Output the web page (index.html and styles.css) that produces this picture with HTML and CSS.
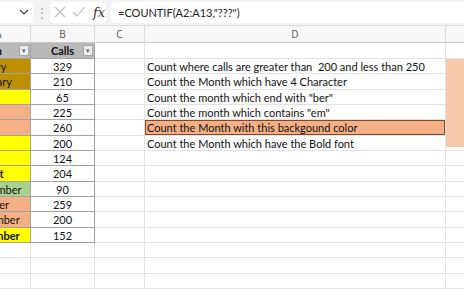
FILE: index.html
```html
<!DOCTYPE html>
<html>
    <head>
        <title>COUNTIF</title>
        <link rel="stylesheet" href="styles.css">
    </head>
    <body>
        <div class="formulaBar">
            <div class="nameBox">
                <svg width="10" height="6" viewBox="0 0 10 6"><path d="M1 1 L5 5 L9 1" fill="none" stroke="#444" stroke-width="1.2"/></svg>
            </div>
            <div class="grip">&#8942;</div>
            <div class="fxBox">
                <svg width="12" height="12" viewBox="0 0 12 12"><path d="M1 1 L11 11 M11 1 L1 11" stroke="#bdbdbd" stroke-width="1.1"/></svg>
                <svg width="14" height="12" viewBox="0 0 14 12"><path d="M1 6 L5 10 L13 1" fill="none" stroke="#bdbdbd" stroke-width="1.1"/></svg>
                <span class="fx">fx</span>
            </div>
            <div class="formula">=COUNTIF(A2:A13,"???")</div>
        </div>

        <div class="sheet">
            <div class="colHeads">
                <div class="colHead">A</div>
                <div class="colHead">B</div>
                <div class="colHead">C</div>
                <div class="colHead">D</div>
                <div class="colHead"></div>
            </div>

            <div class="grid">
                <div class="cell tbl head">Month<span class="filter">&#9662;</span></div>
                <div class="cell tbl head num">Calls<span class="filter">&#9662;</span></div>
                <div class="cell"></div><div class="cell"></div><div class="cell"></div>

                <div class="cell tbl gold">January</div>
                <div class="cell tbl num">329</div>
                <div class="cell"></div><div class="cell">Count where calls are greater than&nbsp; 200 and less than 250</div><div class="cell"></div>

                <div class="cell tbl gold">February</div>
                <div class="cell tbl num">210</div>
                <div class="cell"></div><div class="cell">Count the Month which have 4 Character</div><div class="cell"></div>

                <div class="cell tbl yellow">March</div>
                <div class="cell tbl num">65</div>
                <div class="cell"></div><div class="cell">Count the month which end with "ber"</div><div class="cell"></div>

                <div class="cell tbl salmon">April</div>
                <div class="cell tbl num">225</div>
                <div class="cell"></div><div class="cell">Count the month which contains "em"</div><div class="cell"></div>

                <div class="cell tbl salmon">May</div>
                <div class="cell tbl num">260</div>
                <div class="cell"></div><div class="cell picked">Count the Month with this backgound color</div><div class="cell"></div>

                <div class="cell tbl yellow">June</div>
                <div class="cell tbl num">200</div>
                <div class="cell"></div><div class="cell">Count the Month which have the Bold font</div><div class="cell"></div>

                <div class="cell tbl yellow">July</div>
                <div class="cell tbl num">124</div>
                <div class="cell"></div><div class="cell"></div><div class="cell"></div>

                <div class="cell tbl yellow bold">August</div>
                <div class="cell tbl num">204</div>
                <div class="cell"></div><div class="cell"></div><div class="cell"></div>

                <div class="cell tbl green">September</div>
                <div class="cell tbl num">90</div>
                <div class="cell"></div><div class="cell"></div><div class="cell"></div>

                <div class="cell tbl salmon">October</div>
                <div class="cell tbl num">259</div>
                <div class="cell"></div><div class="cell"></div><div class="cell"></div>

                <div class="cell tbl salmon">November</div>
                <div class="cell tbl num">200</div>
                <div class="cell"></div><div class="cell"></div><div class="cell"></div>

                <div class="cell tbl yellow bold">December</div>
                <div class="cell tbl num">152</div>
                <div class="cell"></div><div class="cell"></div><div class="cell"></div>

                <div class="cell"></div><div class="cell"></div><div class="cell"></div><div class="cell"></div><div class="cell"></div>
                <div class="cell"></div><div class="cell"></div><div class="cell"></div><div class="cell"></div><div class="cell"></div>
                <div class="cell"></div><div class="cell"></div><div class="cell"></div><div class="cell"></div><div class="cell"></div>
            </div>

            <div class="shape"></div>
        </div>
    </body>
</html>
```

FILE: styles.css
```css
body {
    margin: 0px;
    font-family: Lato, "Liberation Sans", sans-serif;
    color: #111;
    background-color: white;
    overflow: hidden;
}
.formulaBar {
    display: flex;
    align-items: center;
    height: 26px;
    box-sizing: border-box;
    padding: 2px 0 3px 0;
    background-color: #f3f3f3;
    border-bottom: 1px solid #dcdcdc;
}
.nameBox {
    width: 33px;
    height: 21px;
    box-sizing: border-box;
    background-color: white;
    border-radius: 0 4px 4px 0;
    display: flex;
    align-items: center;
    justify-content: flex-end;
    padding-right: 4px;
}
.grip {
    width: 17px;
    text-align: center;
    color: #a8a8a8;
    font-size: 12px;
}
.fxBox {
    width: 56px;
    height: 21px;
    box-sizing: border-box;
    background-color: white;
    border-radius: 4px;
    display: flex;
    align-items: center;
    gap: 6px;
    padding-left: 4px;
}
.fx {
    font-family: "DejaVu Serif", serif;
    font-style: italic;
    font-size: 13px;
    color: #333;
    margin-left: 1px;
}
.formula {
    flex: 1;
    height: 21px;
    margin-left: 5px;
    background-color: white;
    border-radius: 4px 0 0 4px;
    padding-left: 7px;
    font-size: 11px;
    line-height: 21px;
    color: #222;
}
.sheet {
    position: relative;
}
.colHeads {
    display: grid;
    grid-template-columns: 64px 64px 50px 301px 60px;
    height: 17px;
    margin-left: -33px;
    background-color: #f7f7f7;
    border-bottom: 1px solid #c8c8c8;
    box-sizing: border-box;
}
.colHead {
    border-right: 1px solid #dadada;
    text-align: center;
    font-family: "Open Sans", sans-serif;
    font-size: 10px;
    line-height: 17px;
    color: #555;
}
.grid {
    display: grid;
    grid-template-columns: 64px 64px 50px 301px 60px;
    grid-template-rows: 16px repeat(15, 15.33px);
    margin-left: -33px;
    font-size: 11px;
}
.cell {
    box-sizing: border-box;
    border-right: 1px solid #e2e2e2;
    border-bottom: 1px solid #e2e2e2;
    padding: 0 2px;
    line-height: 15px;
    white-space: nowrap;
    overflow: hidden;
}
.tbl {
    border-color: #a3a3a3;
}
.head {
    position: relative;
    background-color: #b9b9b9;
    font-weight: bold;
    color: #111;
}
.num {
    text-align: center;
}
.filter {
    position: absolute;
    right: 1px;
    top: 2px;
    width: 10px;
    height: 11px;
    box-sizing: border-box;
    background-color: #ececec;
    border: 1px solid #a9a9a9;
    font-size: 7px;
    line-height: 9px;
    text-align: center;
    color: #666;
    font-weight: normal;
}
.gold {
    background-color: #bf8f00;
}
.yellow {
    background-color: #ffff00;
}
.salmon {
    background-color: #f4b084;
}
.green {
    background-color: #a9d08e;
}
.bold {
    font-weight: bold;
}
.picked {
    background-color: #f4b084;
    box-shadow: inset 0 0 0 1px #7a4b2c;
}
.shape {
    position: absolute;
    left: 446px;
    top: 33px;
    width: 20px;
    height: 88px;
    background-color: #f8c9aa;
}
```
